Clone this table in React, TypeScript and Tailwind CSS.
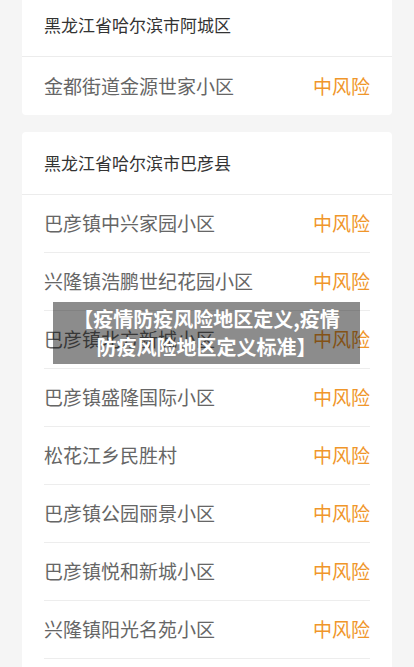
import React from 'react';

const groups = [
  {
    city: '黑龙江省哈尔滨市阿城区',
    items: ['金都街道金源世家小区'],
  },
  {
    city: '黑龙江省哈尔滨市巴彦县',
    items: [
      '巴彦镇中兴家园小区',
      '兴隆镇浩鹏世纪花园小区',
      '巴彦镇北方新城小区',
      '巴彦镇盛隆国际小区',
      '松花江乡民胜村',
      '巴彦镇公园丽景小区',
      '巴彦镇悦和新城小区',
      '兴隆镇阳光名苑小区',
    ],
  },
];

export default function App() {
  return (
    <div
      className="relative h-[667px] overflow-hidden bg-[#f5f5f5]"
      style={{ fontFamily: '"Noto Sans CJK SC", "Noto Sans", sans-serif' }}
    >
      <div className="-mt-[6px] flex flex-col gap-[17px] px-[22px]">
        {groups.map((g, gi) => (
          <div key={g.city} className={`rounded-[4px] bg-white ${gi === groups.length - 1 ? 'pb-[30px]' : ''}`}>
            {/* Header */}
            <div className="flex h-[63px] items-center border-b border-[#ececec] px-[22px] text-[17px] text-[#333]">
              {g.city}
            </div>
            {/* Rows */}
            <div className="px-[22px]">
              {g.items.map((name, i) => (
                <div
                  key={name}
                  className={`flex h-[58px] items-center justify-between text-[19px] ${
                    gi === groups.length - 1 || i < g.items.length - 1 ? 'border-b border-[#ededed]' : ''
                  }`}
                >
                  <span className="text-[#666]">{name}</span>
                  <span className="text-[#f0962a]">中风险</span>
                </div>
              ))}
            </div>
          </div>
        ))}
      </div>

      {/* Title overlay */}
      <div className="absolute left-[53px] top-[302px] flex h-[62px] w-[307px] items-center justify-center bg-black/45 px-[14px] text-center text-[20px] font-bold leading-[28px] text-white">
        【疫情防疫风险地区定义,疫情防疫风险地区定义标准】
      </div>
    </div>
  );
}
